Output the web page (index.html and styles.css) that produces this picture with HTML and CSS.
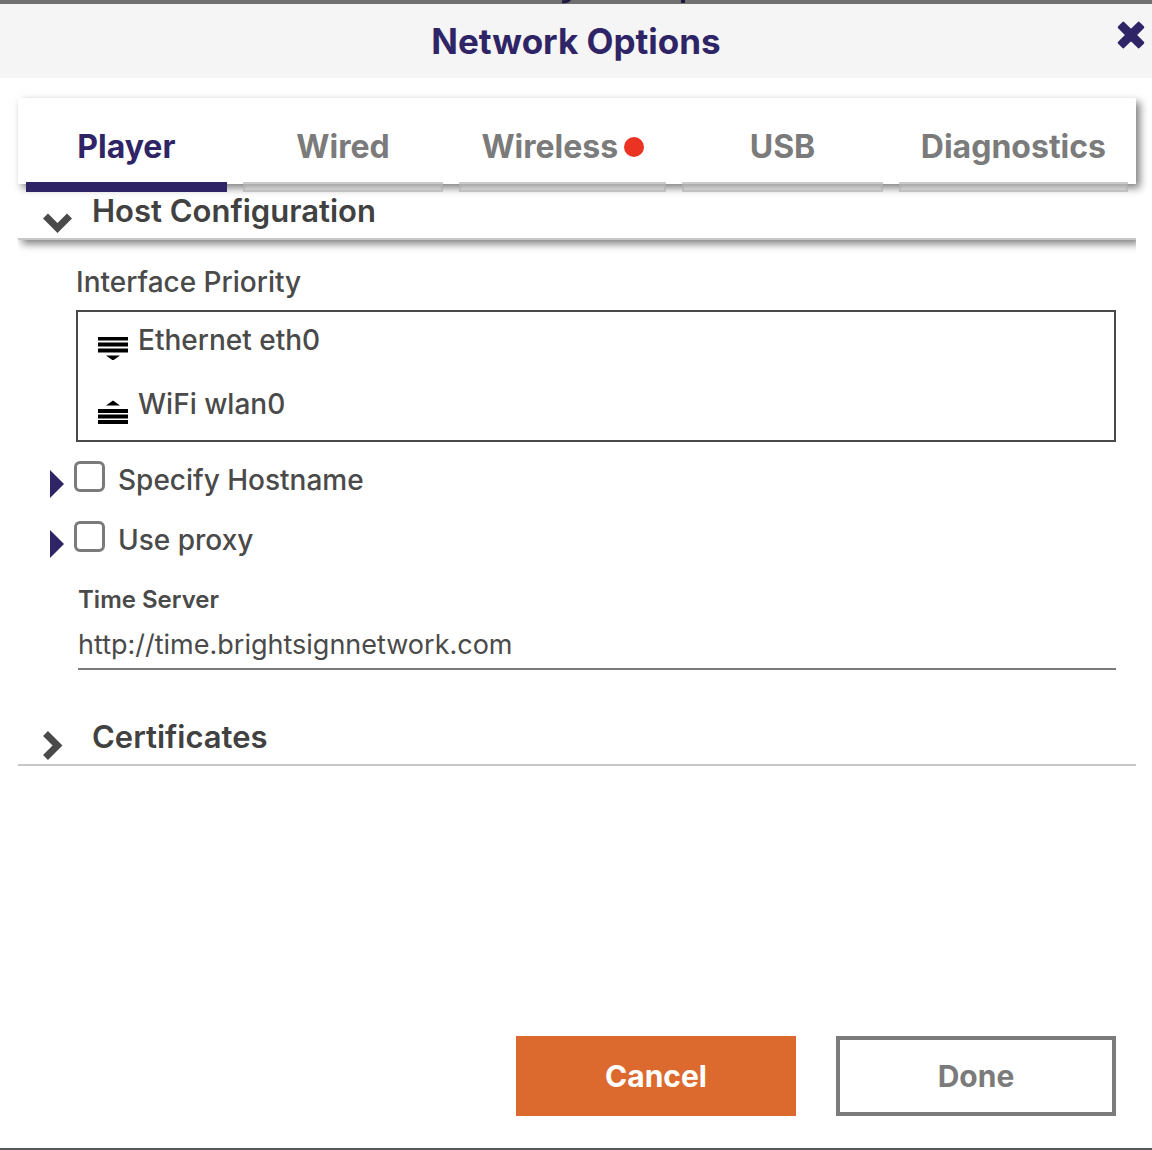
FILE: index.html
```html
<!DOCTYPE html>
<html lang="en">
<head>
<meta charset="utf-8">
<meta name="viewport" content="width=device-width, initial-scale=1">
<title>Network Options</title>
<link rel="stylesheet" href="styles.css">
</head>
<body>
<div class="backdrop" aria-hidden="true">
  <svg width="124" height="4" viewBox="0 0 124 4"><path d="M0 1.500Q5 2.500 8 -1" fill="none" stroke="#1f1a3f" stroke-width="3"/><path d="M119 0h4v3h-4z" fill="#1f1a3f"/></svg>
</div>
<div class="dialog" role="dialog" aria-labelledby="dialog-title">
  <header class="dialog-header">
    <h1 class="dialog-title" id="dialog-title">Network Options</h1>
    <button class="close" type="button" aria-label="Close">
      <svg width="28" height="28" viewBox="0 0 28 28"><path d="M2.200 6.300L6.300 2.200L14 9.900L21.700 2.200L25.800 6.300L18.100 14L25.800 21.700L21.700 25.800L14 18.100L6.300 25.800L2.200 21.700L9.900 14z" fill="currentColor" stroke="currentColor" stroke-width="3" stroke-linejoin="round"/></svg>
    </button>
  </header>

  <main class="content">
    <div class="tabs" role="tablist">
      <button class="tab tab-active" type="button" role="tab" aria-selected="true">Player</button>
      <button class="tab" type="button" role="tab" aria-selected="false">Wired</button>
      <button class="tab" type="button" role="tab" aria-selected="false">Wireless<span class="dot"></span></button>
      <button class="tab" type="button" role="tab" aria-selected="false">USB</button>
      <button class="tab" type="button" role="tab" aria-selected="false">Diagnostics</button>
    </div>

    <section>
      <h2 class="section-heading section-open">
        <button class="section-toggle" type="button" aria-expanded="true">
          <svg class="chevron" width="32" height="32" viewBox="0 0 32 32"><path d="M3.500 12L15.500 24L27.500 12" fill="none" stroke="currentColor" stroke-width="7"/></svg>
          Host Configuration
        </button>
      </h2>
      <div class="section-body">
        <h3 class="label">Interface Priority</h3>
        <ul class="priority">
          <li class="priority-row">
            <svg width="30" height="24" viewBox="0 0 30 24"><path d="M0 1h30v3.500H0zM0 6.500h30v4H0zM0 12.500h30v4H0zM8 19.500h14l-7 5z"/></svg>
            <span class="priority-name">Ethernet eth0</span>
          </li>
          <li class="priority-row">
            <svg width="30" height="24" viewBox="0 0 30 24"><path d="M8 5.500h14l-7-5zM0 9h30v4H0zM0 14.500h30v4H0zM0 20h30v4H0z"/></svg>
            <span class="priority-name">WiFi wlan0</span>
          </li>
        </ul>
        <div class="option">
          <svg class="expander" width="14" height="28" viewBox="0 0 14 28"><path d="M0 0l14 14L0 28z" fill="currentColor"/></svg>
          <input class="checkbox" type="checkbox" id="hostname">
          <label class="option-label" for="hostname">Specify Hostname</label>
        </div>
        <div class="option">
          <svg class="expander" width="14" height="28" viewBox="0 0 14 28"><path d="M0 0l14 14L0 28z" fill="currentColor"/></svg>
          <input class="checkbox" type="checkbox" id="proxy">
          <label class="option-label" for="proxy">Use proxy</label>
        </div>
        <div class="field">
          <label class="field-label" for="time-server">Time Server</label>
          <input class="field-input" type="text" id="time-server" value="http://time.brightsignnetwork.com">
        </div>
      </div>
    </section>

    <section>
      <h2 class="section-heading">
        <button class="section-toggle" type="button" aria-expanded="false">
          <svg class="chevron" width="32" height="32" viewBox="0 0 32 32"><path d="M3.500 3.500L15.500 15.500L3.500 27.500" fill="none" stroke="currentColor" stroke-width="7"/></svg>
          Certificates
        </button>
      </h2>
    </section>
  </main>

  <footer class="actions">
    <button class="action action-primary" type="button">Cancel</button>
    <button class="action" type="button">Done</button>
  </footer>
</div>
</body>
</html>
```
FILE: styles.css
```css
*,
*::after {
  box-sizing: border-box;
}

body {
  margin: 0;
  min-height: 100vh;
  display: flex;
  flex-direction: column;
  background: #fff;
  color: #4a4a4a;
  font-family: Inter, "Liberation Sans", sans-serif;
}

button,
input {
  font: inherit;
  color: inherit;
}

button {
  margin: 0;
  padding: 0;
  border: 0;
  background: none;
}

h1,
h2,
h3,
ul {
  margin: 0;
  padding: 0;
}

.backdrop {
  display: flex;
  justify-content: center;
  height: 4px;
  padding-left: 96px;
  background: #707070;
}

.dialog {
  flex: 1;
  display: flex;
  flex-direction: column;
  border-bottom: 2px solid #58585a;
}

.dialog-header {
  display: grid;
  grid-template-columns: 1fr auto 1fr;
  height: 74px;
  padding: 0 7px;
  background: #f5f5f5;
  color: #2f2566;
}

.dialog-title {
  grid-column: 2;
  font-size: 35px;
  font-weight: 700;
  line-height: 74px;
}

.close {
  justify-self: end;
  align-self: start;
  height: 28px;
  margin-top: 17px;
}

.close svg {
  display: block;
}

.content {
  flex: 1;
  padding: 20px 16px 0 18px;
}

.tabs {
  display: flex;
  gap: 16px;
  padding: 0 8px;
  background: #fff;
  box-shadow: 4px 4px 8px rgba(0, 0, 0, 0.5);
}

.tab {
  display: flex;
  flex: 1 1 0;
  align-items: center;
  justify-content: center;
  position: relative;
  height: 94px;
  margin-bottom: -8px;
  padding: 3px 22px 0;
  font-size: 32px;
  font-weight: 700;
  color: #7b7b7b;
}

.tab::after {
  content: "";
  position: absolute;
  inset: auto 0 0;
  height: 10px;
  border: 2px solid rgba(170, 170, 170, 0.5);
  background: rgba(204, 204, 204, 0.4);
}

.tab-active {
  color: #2f2566;
}

.tab-active::after {
  border-color: #2f2566;
  background: #2f2566;
}

.dot {
  width: 20px;
  height: 20px;
  margin-left: 6px;
  border-radius: 50%;
  background: #eb3323;
}

.section-heading {
  height: 56px;
  border-bottom: 2px solid #c8c8c8;
  font-size: 31px;
  font-weight: 600;
  color: #414141;
}

.section-open {
  box-shadow: 4px 4px 8px rgba(0, 0, 0, 0.5);
  clip-path: inset(8px 0 -16px);
}

.section-toggle {
  display: flex;
  width: 100%;
  gap: 18px;
  padding-left: 24px;
  line-height: 54px;
  text-align: left;
}

.chevron {
  margin-top: 20px;
  color: #4a4a4a;
}

.section-body {
  padding: 22px 20px 40px 32px;
}

.label,
.priority,
.field {
  margin-left: 26px;
}

.label {
  font-size: 28px;
  font-weight: 500;
  line-height: 40px;
}

.priority {
  margin-top: 8px;
  margin-bottom: 8px;
  border: 2px solid #4a4a4a;
  list-style: none;
}

.priority-row {
  display: flex;
  align-items: flex-end;
  gap: 10px;
  height: 64px;
  padding: 0 20px 16px;
  font-size: 28px;
  font-weight: 500;
}

.priority-name {
  line-height: 40px;
}

.option {
  display: flex;
  align-items: center;
  height: 60px;
}

.expander {
  margin: 8px 10px 0 0;
  color: #2f2566;
}

.checkbox {
  appearance: none;
  width: 31px;
  height: 31px;
  margin: 0 13px 8px 0;
  border: 3px solid #7b7b7b;
  border-radius: 6px;
  background: #fff;
}

.option-label {
  font-size: 28px;
  font-weight: 500;
}

.field {
  display: flex;
  flex-direction: column;
  padding-left: 2px;
}

.field-label {
  font-size: 24px;
  font-weight: 600;
  line-height: 60px;
}

.field-input {
  width: 100%;
  height: 40px;
  padding: 0 0 10px;
  border: 0;
  border-bottom: 2px solid #7b7b7b;
  background: none;
  font-size: 27px;
}

.actions {
  display: flex;
  flex-wrap: wrap;
  justify-content: flex-end;
  gap: 40px;
  padding: 32px 36px;
}

.action {
  width: 280px;
  height: 80px;
  border: 4px solid #7b7b7b;
  font-size: 30px;
  font-weight: 700;
  color: #7b7b7b;
}

.action-primary {
  border-color: #dc692e;
  background: #dc692e;
  color: #fff;
}
```
